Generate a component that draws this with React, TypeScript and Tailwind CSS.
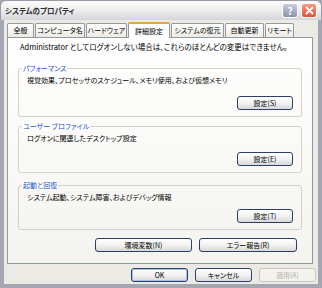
import React from "react";

const font = { fontFamily: '"Noto Sans CJK JP", "Noto Sans", sans-serif', fontFeatureSettings: '"palt"' };

function Btn({ label, w, def, disabled }: { label: string; w: string; def?: boolean; disabled?: boolean }) {
  return (
    <div
      className={`${w} h-[14px] rounded-[3px] border flex items-center justify-center text-[7px] leading-none whitespace-nowrap ${
        disabled
          ? "border-[#c9c8c0] bg-[#f3f2ee] text-[#b5b3a8]"
          : def
          ? "border-[#2b3f6b] bg-gradient-to-b from-[#ffffff] via-[#f2f2f0] to-[#d8d8dc] text-black shadow-[inset_0_0_0_1px_#a9c0e8]"
          : "border-[#2b3f6b] bg-gradient-to-b from-[#ffffff] via-[#f2f2f0] to-[#d8d8dc] text-black"
      }`}
    >
      {label}
    </div>
  );
}

function Group({ title, desc, btn, h }: { title: string; desc: string; btn: string; h: string }) {
  return (
    <div className={`${h} mx-[10px] border border-[#d2d1c6] rounded-[3px] px-[8px] pt-[6px] pb-[6px] flex flex-col justify-between relative`}>
      <span className="absolute -top-[6px] left-[3px] px-[1px] bg-white text-[7px] leading-[10px] text-[#1b4fc8] whitespace-nowrap">{title}</span>
      <div className="text-[7px] leading-[10px] text-black whitespace-nowrap">{desc}</div>
      <div className="flex justify-end">
        <Btn label={btn} w="w-[56px]" />
      </div>
    </div>
  );
}

export default function App() {
  const tabs: [string, string, boolean][] = [
    ["全般", "w-[27px]", false],
    ["コンピュータ名", "w-[50px]", false],
    ["ハードウェア", "w-[41px]", false],
    ["詳細設定", "w-[42px]", true],
    ["システムの復元", "w-[53px]", false],
    ["自動更新", "w-[39px]", false],
    ["リモート", "w-[29px]", false],
  ];
  return (
    <div style={font} className="w-[322px] h-[288px] bg-[#a6a6b2] flex flex-col overflow-hidden">
      {/* title bar */}
      <div className="h-[20px] flex items-center bg-gradient-to-b from-[#fbfbfb] via-[#ececee] to-[#d6d6da] border-x border-t border-[#9a9aa6] rounded-t-[6px] pl-[4px] pr-[4px]">
        <span className="text-[7.5px] font-bold text-[#303030] leading-none">システムのプロパティ</span>
        <div className="flex-1" />
        <div className="w-[16px] h-[15px] rounded-[3px] border border-white bg-gradient-to-b from-[#c8ccdc] to-[#8c92ac] flex items-center justify-center text-white text-[10px] font-bold leading-none">?</div>
        <div className="ml-[3px] w-[16px] h-[15px] rounded-[3px] border border-white bg-gradient-to-b from-[#f09a80] to-[#d8553a] flex items-center justify-center">
          <svg width="9" height="9" viewBox="0 0 9 9">
            <path d="M1.5 1.5 L7.5 7.5 M7.5 1.5 L1.5 7.5" stroke="white" strokeWidth="1.8" strokeLinecap="round" />
          </svg>
        </div>
      </div>
      {/* body */}
      <div className="flex-1 mx-[4px] mb-[4px] bg-[#ebeae5] flex flex-col">
        {/* tabs */}
        <div className="flex items-end h-[17px] pl-[3px] relative z-10">
          {tabs.map(([t, w, sel], i) => (
            <div
              key={i}
              className={`${w} ${i > 0 ? "ml-[1px]" : ""} ${
                sel
                  ? "h-[16px] bg-white border-x border-[#919b9c] border-t-[2px] border-t-[#e8a53a] -mb-[1px]"
                  : "h-[14px] bg-gradient-to-b from-[#ffffff] to-[#ecebe5] border-x border-t border-[#919b9c]"
              } rounded-t-[2px] flex items-center justify-center text-[7px] leading-none text-black whitespace-nowrap`}
            >
              {t}
            </div>
          ))}
        </div>
        {/* panel */}
        <div className="ml-[3px] w-[306px] h-[227px] border border-[#919b9c] bg-gradient-to-b from-[#ffffff] to-[#f4f3ee] flex flex-col">
          <div className="pl-[12px] pt-[4px] text-[7.5px] leading-[10px] text-black whitespace-nowrap">
            Administrator としてログオンしない場合は、これらのほとんどの変更はできません。
          </div>
          <div className="h-[16px]" />
          <Group title="パフォーマンス" desc="視覚効果、プロセッサのスケジュール、メモリ使用、および仮想メモリ" btn="設定(S)" h="h-[49px]" />
          <div className="h-[9px]" />
          <Group title="ユーザー プロファイル" desc="ログオンに関連したデスクトップ設定" btn="設定(E)" h="h-[47px]" />
          <div className="h-[12px]" />
          <Group title="起動と回復" desc="システム起動、システム障害、およびデバッグ情報" btn="設定(T)" h="h-[45px]" />
          <div className="flex justify-end gap-[7px] pr-[15px] mt-[8px]">
            <Btn label="環境変数(N)" w="w-[97px]" />
            <Btn label="エラー報告(R)" w="w-[98px]" />
          </div>
        </div>
        {/* bottom buttons */}
        <div className="flex justify-end gap-[7px] pr-[2px] mt-[4px]">
          <Btn label="OK" w="w-[57px]" def />
          <Btn label="キャンセル" w="w-[57px]" />
          <Btn label="適用(A)" w="w-[57px]" disabled />
        </div>
      </div>
    </div>
  );
}
